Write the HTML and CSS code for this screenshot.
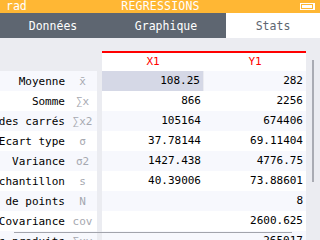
FILE: index.html
```html
<!DOCTYPE html>
<html lang="fr">
<head>
  <meta charset="UTF-8" />
  <title>Regressions</title>
  <link rel="stylesheet" href="styles.css">
</head>
<body>
  <div class="screen">
    <div class="titlebar">
      <span class="angle">rad</span>
      <span class="title">REGRESSIONS</span>
      <span class="battery"><span class="level"></span></span>
    </div>

    <div class="tabs">
      <div class="tab">Données</div>
      <div class="tab">Graphique</div>
      <div class="tab active">Stats</div>
    </div>

    <div class="stats">
      <div class="grid">
        <div class="corner"></div>
        <div class="head">X1</div>
        <div class="head">Y1</div>

        <div class="label odd"><span class="name">Moyenne</span><span class="sym">x̄</span></div>
        <div class="val odd selected">108.25</div>
        <div class="val odd">282</div>

        <div class="label"><span class="name">Somme</span><span class="sym">∑x</span></div>
        <div class="val">866</div>
        <div class="val">2256</div>

        <div class="label odd"><span class="name">Somme des carrés</span><span class="sym">∑x2</span></div>
        <div class="val odd">105164</div>
        <div class="val odd">674406</div>

        <div class="label"><span class="name">Ecart type</span><span class="sym">σ</span></div>
        <div class="val">37.78144</div>
        <div class="val">69.11404</div>

        <div class="label odd"><span class="name">Variance</span><span class="sym">σ2</span></div>
        <div class="val odd">1427.438</div>
        <div class="val odd">4776.75</div>

        <div class="label"><span class="name">Ecart type échantillon</span><span class="sym">s</span></div>
        <div class="val">40.39006</div>
        <div class="val">73.88601</div>

        <div class="label odd"><span class="name">Nombre de points</span><span class="sym">N</span></div>
        <div class="val odd"></div>
        <div class="val odd">8</div>

        <div class="label"><span class="name">Covariance</span><span class="sym">cov</span></div>
        <div class="val"></div>
        <div class="val">2600.625</div>

        <div class="label odd"><span class="name">Somme des produits</span><span class="sym">∑xy</span></div>
        <div class="val odd"></div>
        <div class="val odd">265017</div>
      </div>

      <div class="vscroll"></div>
      <div class="hscroll"></div>
    </div>
  </div>
</body>
</html>
```

FILE: styles.css
```css
* {
  box-sizing: border-box;
}

body {
  margin: 0;
  font-family: 'DejaVu Sans Mono', 'Liberation Mono', monospace;
  font-size: 11px;
  color: #000;
}

.screen {
  width: 320px;
  height: 240px;
  overflow: hidden;
  background: #ebecf1;
  display: flex;
  flex-direction: column;
}

/* top bar */
.titlebar {
  flex-shrink: 0;
  height: 13px;
  background: #ffb734;
  color: #fff;
  display: grid;
  grid-template-columns: 1fr auto 1fr;
  align-items: center;
  padding: 0 5px 0 6px;
  font-size: 11.5px;
  line-height: 13px;
}

.title {
  letter-spacing: 0.2px;
}

.battery {
  justify-self: end;
  width: 15px;
  height: 7px;
  border: 1px solid #fff;
  border-right-width: 2px;
  padding: 1px;
}

.battery .level {
  display: block;
  height: 100%;
  background: #fff;
}

/* tabs */
.tabs {
  flex-shrink: 0;
  height: 25px;
  display: flex;
  background: #5e6671;
}

.tab {
  flex: 0 0 auto;
  display: flex;
  align-items: center;
  justify-content: center;
  color: #fff;
  font-size: 11.5px;
}

.tab:nth-child(1) { width: 106px; }
.tab:nth-child(2) { width: 120px; }
.tab:nth-child(3) { width: 94px; }

.tab.active {
  background: #fff;
  color: #5e6671;
}

/* stats table */
.stats {
  position: relative;
  flex: 1 0 auto;
  padding-top: 13px;
}

.grid {
  display: grid;
  grid-template-columns: 102px 102px 102px;
  grid-auto-rows: 20px;
}

.head {
  background: #fff;
  border-top: 2px solid #ff0000;
  color: #ff0000;
  text-align: center;
  line-height: 18px;
}

.label {
  margin-right: 5px;
  background: #fff;
  display: flex;
  justify-content: flex-end;
  align-items: center;
  overflow: hidden;
  white-space: nowrap;
}

.label .name {
  flex-shrink: 0;
  padding-right: 3px;
}

.label .sym {
  flex: 0 0 29px;
  text-align: center;
  color: #a6a8b0;
}

.val {
  background: #fff;
  text-align: right;
  padding-right: 3px;
  line-height: 20px;
}

.odd {
  background: #f7f8fd;
}

.val.selected {
  background: #d5d8e6;
  margin-right: 1px;
}

.vscroll {
  position: absolute;
  left: 312px;
  top: 22px;
  width: 2px;
  height: 122px;
  background: #a9abb3;
}

.hscroll {
  position: absolute;
  left: 14px;
  top: 194px;
  width: 278px;
  height: 1px;
  background: #a2a4ac;
}
```
